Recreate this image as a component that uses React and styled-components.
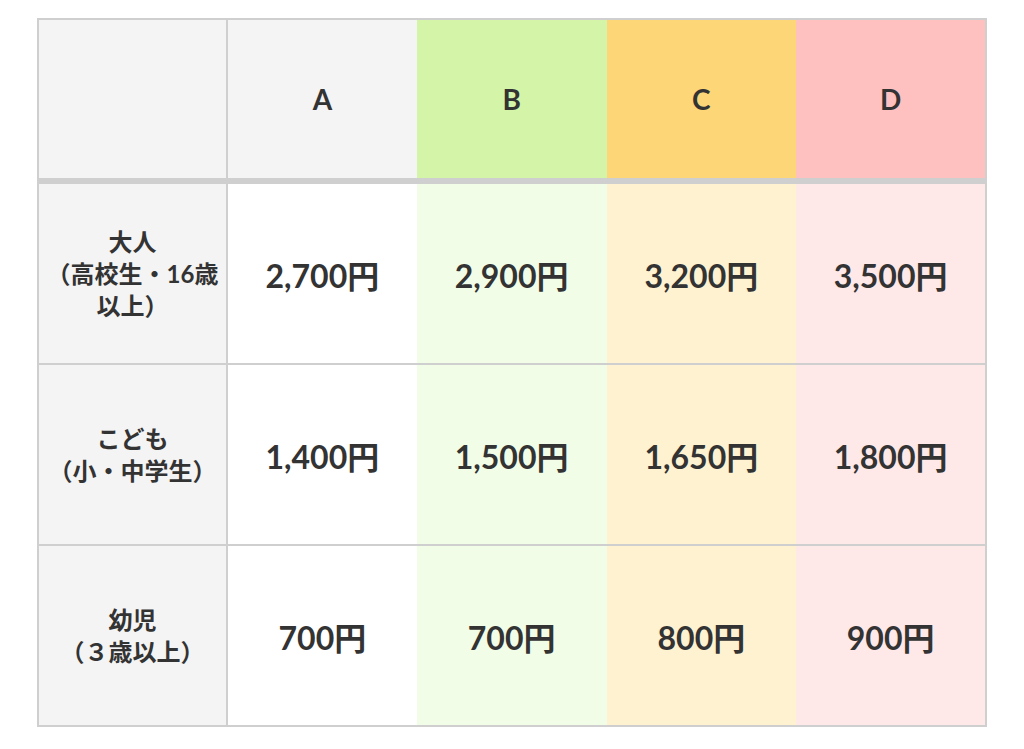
import React from 'react'
import styled, { createGlobalStyle } from 'styled-components'

const GlobalStyle = createGlobalStyle`
  body {
    margin: 0;
    background-color: #ffffff;
    font-family: Lato, "Noto Sans CJK JP", sans-serif;
    color: #333333;
  }
`

const tones = {
  plain: { head: '#f4f4f4', body: '#ffffff' },
  green: { head: '#d4f5a8', body: '#f1fde7' },
  orange: { head: '#fdd677', body: '#fef2d1' },
  red: { head: '#ffc0c0', body: '#ffe8e8' },
}

const Page = styled.div`
  padding: 18px 37px;
`

const Table = styled.table`
  width: 950px;
  table-layout: fixed;
  border-collapse: collapse;
  border: 2px solid #cfcfcf;
`

const HeadCell = styled.th`
  height: 158px;
  padding: 0;
  background-color: ${({ tone }) => tones[tone].head};
  font-family: Lato, "Noto Sans CJK JP", sans-serif;
  font-size: 28px;
  font-weight: 700;
  color: #333333;
  text-align: center;
  vertical-align: middle;
  border-bottom: 6px solid #cfcfcf;
`

const LabelCell = styled.th`
  width: 187px;
  height: 179px;
  padding: 0 3px;
  box-sizing: border-box;
  background-color: #f4f4f4;
  border-right: 2px solid #cfcfcf;
  border-bottom: 2px solid #cfcfcf;
  font-family: Lato, "Noto Sans CJK JP", sans-serif;
  font-size: 24px;
  font-weight: 700;
  line-height: 32px;
  color: #333333;
  text-align: center;
  vertical-align: middle;
`

const CornerCell = styled(HeadCell)`
  width: 187px;
  border-right: 2px solid #cfcfcf;
`

const PriceCell = styled.td`
  height: 179px;
  padding: 0;
  background-color: ${({ tone }) => tones[tone].body};
  border-bottom: 2px solid #cfcfcf;
  font-size: 32px;
  font-weight: 700;
  color: #333333;
  text-align: center;
  vertical-align: middle;
`

const columns = [
  { name: 'A', tone: 'plain' },
  { name: 'B', tone: 'green' },
  { name: 'C', tone: 'orange' },
  { name: 'D', tone: 'red' },
]

const rows = [
  { label: '大人\n（高校生・16歳以上）', prices: ['2,700円', '2,900円', '3,200円', '3,500円'] },
  { label: 'こども\n（小・中学生）', prices: ['1,400円', '1,500円', '1,650円', '1,800円'] },
  { label: '幼児\n（３歳以上）', prices: ['700円', '700円', '800円', '900円'] },
]

const App = () => {
  return (
    <React.Fragment>
      <GlobalStyle />
      <Page>
        <Table>
          <thead>
            <tr>
              <CornerCell tone="plain" />
              {columns.map((col) => (
                <HeadCell key={col.name} tone={col.tone}>
                  {col.name}
                </HeadCell>
              ))}
            </tr>
          </thead>
          <tbody>
            {rows.map((row) => {
              const [title, note] = row.label.split('\n')
              return (
                <tr key={title}>
                  <LabelCell>
                    {title}
                    <br />
                    {note}
                  </LabelCell>
                  {row.prices.map((price, i) => (
                    <PriceCell key={i} tone={columns[i].tone}>
                      {price}
                    </PriceCell>
                  ))}
                </tr>
              )
            })}
          </tbody>
        </Table>
      </Page>
    </React.Fragment>
  )
}

export default App
